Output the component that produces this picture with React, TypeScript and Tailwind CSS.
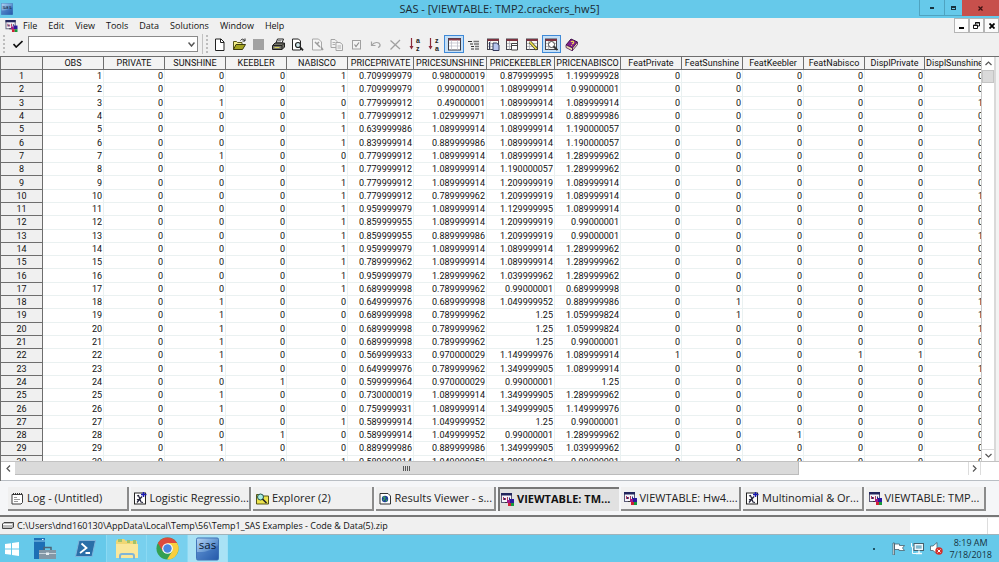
import React from "react";

type Column = { name: string; col: string };

const columns: Column[] = [
  { name: "OBS", col: "w-[61px]" },
  { name: "PRIVATE", col: "w-[61px]" },
  { name: "SUNSHINE", col: "w-[61px]" },
  { name: "KEEBLER", col: "w-[61px]" },
  { name: "NABISCO", col: "w-[61px]" },
  { name: "PRICEPRIVATE", col: "w-[66px]" },
  { name: "PRICESUNSHINE", col: "w-[73px]" },
  { name: "PRICEKEEBLER", col: "w-[68px]" },
  { name: "PRICENABISCO", col: "w-[66px]" },
  { name: "FeatPrivate", col: "w-[61px]" },
  { name: "FeatSunshine", col: "w-[61px]" },
  { name: "FeatKeebler", col: "w-[61px]" },
  { name: "FeatNabisco", col: "w-[61px]" },
  { name: "DisplPrivate", col: "w-[60px]" },
  { name: "DisplSunshine", col: "w-[60px]" },
];

// choice flags | four prices | feature and display flags
const records = `
0 0 0 1 0.709999979 0.980000019 0.879999995 1.199999928 0 0 0 0 0 0
0 0 0 1 0.709999979 0.99000001 1.089999914 0.99000001 0 0 0 0 0 0
0 1 0 0 0.779999912 0.49000001 1.089999914 1.089999914 0 0 0 0 0 1
0 0 0 1 0.779999912 1.029999971 1.089999914 0.889999986 0 0 0 0 0 0
0 0 0 1 0.639999986 1.089999914 1.089999914 1.190000057 0 0 0 0 0 0
0 0 0 1 0.839999914 0.889999986 1.089999914 1.190000057 0 0 0 0 0 0
0 1 0 0 0.779999912 1.089999914 1.089999914 1.289999962 0 0 0 0 0 0
0 0 0 1 0.779999912 1.089999914 1.190000057 1.289999962 0 0 0 0 0 0
0 0 0 1 0.779999912 1.089999914 1.209999919 1.089999914 0 0 0 0 0 0
0 0 0 1 0.779999912 0.789999962 1.209999919 1.089999914 0 0 0 0 0 1
0 0 0 1 0.959999979 1.089999914 1.129999995 1.089999914 0 0 0 0 0 0
0 0 0 1 0.859999955 1.089999914 1.209999919 0.99000001 0 0 0 0 0 0
0 0 0 1 0.859999955 0.889999986 1.209999919 0.99000001 0 0 0 0 0 1
0 0 0 1 0.959999979 1.089999914 1.089999914 1.289999962 0 0 0 0 0 0
0 0 0 1 0.789999962 1.089999914 1.089999914 1.289999962 0 0 0 0 0 0
0 0 0 1 0.959999979 1.289999962 1.039999962 1.289999962 0 0 0 0 0 0
0 0 0 1 0.689999998 0.789999962 0.99000001 0.689999998 0 0 0 0 0 0
0 1 0 0 0.649999976 0.689999998 1.049999952 0.889999986 0 1 0 0 0 1
0 1 0 0 0.689999998 0.789999962 1.25 1.059999824 0 1 0 0 0 1
0 1 0 0 0.689999998 0.789999962 1.25 1.059999824 0 0 0 0 0 1
0 1 0 0 0.689999998 0.789999962 1.25 0.99000001 0 0 0 0 0 0
0 1 0 0 0.569999933 0.970000029 1.149999976 1.089999914 1 0 0 1 1 0
0 1 0 0 0.649999976 0.789999962 1.349999905 1.089999914 0 0 0 0 0 1
0 0 1 0 0.599999964 0.970000029 0.99000001 1.25 0 0 0 0 0 0
0 1 0 0 0.730000019 1.089999914 1.349999905 1.289999962 0 0 0 0 0 0
0 1 0 0 0.759999931 1.089999914 1.349999905 1.149999976 0 0 0 0 0 0
0 0 0 1 0.589999914 1.049999952 1.25 0.99000001 0 0 0 0 0 0
0 0 1 0 0.589999914 1.049999952 0.99000001 1.289999962 0 0 1 0 0 0
0 1 0 0 0.889999986 0.889999986 1.349999905 1.039999962 0 0 0 0 0 0
0 0 0 1 0.589999914 1.049999952 1.289999962 0.99000001 0 0 0 0 0 0
`
  .trim()
  .split("\n")
  .map((line) => line.split(" "));

/* ---------- icons ---------- */

function ViewtableIcon({ className = "h-[13px] w-[13px]" }: { className?: string }) {
  return (
    <svg viewBox="0 0 13 13" className={className} aria-hidden="true">
      <rect x="0.5" y="0.5" width="10" height="9" fill="#f4f4fa" stroke="#5b5b78" />
      <path d="M0 0h11v2.5H0z" fill="#22255c" />
      <path d="M2.5 7V4M4.5 7V5M6.5 7V4" stroke="#b03a5a" strokeWidth="1" />
      <path d="M3.5 7V5M8.5 7V4.5" stroke="#28287a" strokeWidth="1" />
      <path d="M4 9.5h3" stroke="#333" strokeWidth="1" />
      <rect x="6" y="7" width="3" height="3" fill="#a01888" />
      <rect x="9" y="6" width="4" height="4" fill="#2a1a9c" />
      <rect x="7" y="10" width="3" height="3" fill="#d01f35" />
      <rect x="10" y="10" width="3" height="3" fill="#149a3c" />
    </svg>
  );
}

function SasBadge({ className }: { className: string }) {
  return (
    <svg viewBox="0 0 24 24" className={className} aria-hidden="true">
      <defs>
        <linearGradient id="sasBlue" x1="0" y1="0" x2="1" y2="1">
          <stop offset="0" stopColor="#b9d6f3" />
          <stop offset="0.45" stopColor="#6fa0d8" />
          <stop offset="1" stopColor="#1d4f9e" />
        </linearGradient>
      </defs>
      <rect x="0.5" y="0.5" width="23" height="23" rx="1.5" fill="url(#sasBlue)" stroke="#3b6fb5" />
      <path d="M1 15C9 16 17 13 23 8v15H1z" fill="#2b62b4" opacity="0.55" />
      <text x="12" y="12" textAnchor="middle" fontSize="12" fontWeight="500" fontFamily="Open Sans, sans-serif" fill="#0a1830">
        sas
      </text>
    </svg>
  );
}

function Glyph({ children, size = "h-[13px] w-[13px]" }: { children: React.ReactNode; size?: string }) {
  return (
    <svg viewBox="0 0 13 13" className={size} fill="none" aria-hidden="true">
      {children}
    </svg>
  );
}

const NewIcon = () => (
  <Glyph>
    <path d="M2.5 1h5.5l3 3v8.5h-8.5z" fill="#fff" stroke="#222" />
    <path d="M7.5 1v3.5h3.5" stroke="#222" />
  </Glyph>
);
const OpenIcon = () => (
  <Glyph>
    <path d="M0.5 11.5v-8h3l1 1h4.5v2" fill="#f3ee8a" stroke="#55551c" />
    <path d="M0.5 11.5l2.5-5h9.5l-3 5z" fill="#a5a421" stroke="#3c3c10" />
    <path d="M7.5 2.5c1.5-2 3-1.5 4 0M12 0.5v2.5H9.5" stroke="#222" />
  </Glyph>
);
const SaveIcon = () => (
  <Glyph>
    <rect x="1" y="1" width="11" height="11" fill="#a2a2a2" />
  </Glyph>
);
const PrintIcon = () => (
  <Glyph>
    <path d="M4 5l1.5-4h6L10 5z" fill="#fff" stroke="#222" />
    <path d="M5.5 2.5h4M5 4h4" stroke="#555" strokeWidth="0.7" />
    <path d="M0.5 7.5L3 5h9.5v4L10 11.5H0.5z" fill="#74746a" stroke="#1e1e1e" />
    <path d="M1 7.5h9v4M10 7.5L12.5 5" stroke="#222" />
    <path d="M2.5 9.5h5" stroke="#d9d35a" />
  </Glyph>
);
const PreviewIcon = () => (
  <Glyph>
    <path d="M1.5 1h6l2 2v9h-8z" fill="#fff" stroke="#222" />
    <circle cx="7" cy="7" r="2.5" fill="#cfe6ea" stroke="#222" strokeWidth="1.2" />
    <path d="M9 9l3 3.3" stroke="#222" strokeWidth="1.8" />
  </Glyph>
);
const CutIcon = () => (
  <Glyph>
    <path d="M1.5 1h6l3 3v8h-9z" fill="#f5f5f5" stroke="#a8a8a8" />
    <path d="M4 4l5 5M8 4L6 6M10 9l2 3" stroke="#9c9c9c" strokeWidth="1.5" />
  </Glyph>
);
const CopyIcon = () => (
  <Glyph>
    <path d="M1 1.5h4l2 2v6H1z" fill="#f2f2f2" stroke="#a5a5a5" />
    <path d="M6 4.5h4l2.5 2v6H6z" fill="#f2f2f2" stroke="#a5a5a5" />
    <path d="M2.5 4.5h3M2.5 6.5h3M7.5 8h3.5M7.5 10h3.5" stroke="#b0b0b0" />
  </Glyph>
);
const SubmitIcon = () => (
  <Glyph>
    <rect x="2.5" y="2.5" width="8" height="8.5" fill="#f4f4f4" stroke="#a0a0a0" />
    <path d="M4.5 6.5l1.5 2 3-4" stroke="#8e8e8e" strokeWidth="1.2" />
  </Glyph>
);
const UndoIcon = () => (
  <Glyph>
    <path d="M2.5 3.5v4h4M3 7c2-3 7-3.5 8-.5 .3 1.5-.5 2.5-2 3" stroke="#a3a3a3" strokeWidth="1.2" />
  </Glyph>
);
const DeleteIcon = () => (
  <Glyph>
    <path d="M1.5 2.5l9.5 8.5M11 2L1.5 11.5" stroke="#a0a0a0" strokeWidth="1.3" />
  </Glyph>
);
function SortIcon({ top, bottom }: { top: string; bottom: string }) {
  return (
    <svg viewBox="0 0 13 18" className="h-[18px] w-[13px]" fill="none" aria-hidden="true">
      <path d="M2.5 3v9" stroke="#8c2a3a" strokeWidth="1.2" />
      <path d="M0.5 11h4L2.5 14.5z" fill="#8c2a3a" />
      <text x="7" y="8" fontSize="7" fontWeight="700" fontFamily="Liberation Sans, sans-serif" fill="#222">
        {top}
      </text>
      <text x="7" y="16" fontSize="7" fontWeight="700" fontFamily="Liberation Sans, sans-serif" fill="#222">
        {bottom}
      </text>
    </svg>
  );
}
const TableViewIcon = () => (
  <Glyph>
    <rect x="0.5" y="0.5" width="12" height="11.5" fill="#fff" stroke="#3b3b44" />
    <path d="M0.5 1.5h12" stroke="#8b3e4a" strokeWidth="2" />
    <path d="M3.5 2v10M9.5 2v10M1 5h11M1 8h11" stroke="#b9b9c4" strokeWidth="0.7" />
  </Glyph>
);
const FormViewIcon = () => (
  <Glyph>
    <path d="M1 3.5h4M3 6h3M4 8.5h3M4 11h3" stroke="#333" strokeWidth="1.2" />
    <path d="M6.5 3.5h5.5M7 6h5M8 8.5h4M8 11h4" stroke="#777" strokeWidth="1.5" />
  </Glyph>
);
function SheetIcon({ kind }: { kind: "paste" | "columns" | "edit" | "find" }) {
  return (
    <Glyph>
      <rect x="0.5" y="1" width="11" height="10.5" fill="#f7f7f2" stroke="#45454c" />
      <path d="M0.5 2h11.5" stroke="#7d3340" strokeWidth="2" />
      <path d="M3.5 3v8.5M1 5.5h10M1 8.5h10" stroke="#a5a5b0" strokeWidth="0.7" />
      {kind === "paste" && <path d="M2.5 4v7M6 5h3.5l2.5 2v5.5H6z" fill="#b9c6ee" stroke="#333a5c" />}
      {kind === "columns" && <path d="M5.5 5.5h6v6.5h-6zM5.5 7.5h6" fill="#fff" stroke="#444" />}
      {kind === "edit" && (
        <>
          <path d="M4 4l7 7.5" stroke="#3c3c22" strokeWidth="3" />
          <path d="M4 4l6.5 7" stroke="#ece04a" strokeWidth="1.8" />
        </>
      )}
      {kind === "find" && (
        <>
          <circle cx="6.5" cy="6.5" r="3" fill="#fff" stroke="#444" />
          <path d="M8.5 8.5l4 3.5" stroke="#333" strokeWidth="1.8" />
        </>
      )}
    </Glyph>
  );
}
const HelpBookIcon = () => (
  <Glyph>
    <path d="M1 7l5-6 6.5 3-5 6z" fill="#84208c" stroke="#3c0e46" />
    <path d="M1 7v2.5l6.5 3.5v-3zM7.5 10l5-6v2.5l-5 6z" fill="#f0dfb0" stroke="#4c1656" strokeWidth="0.8" />
    <path d="M6 4c1-1.5 3.5-.5 2.5 1L7 6M6.2 7.5h.8" stroke="#f4e34f" strokeWidth="1.1" />
  </Glyph>
);

const LogIcon = () => (
  <Glyph>
    <path d="M1 2.5h10.5v8L10 12H1z" fill="#fff" stroke="#3d3d3d" />
    <path d="M2.5 1v2M4.5 1v2M6.5 1v2M8.5 1v2M10.5 1v2" stroke="#333" />
    <path d="M3 5.5h3M3 7.5h6M3 9.5h4" stroke="#999" />
  </Glyph>
);
const ProgramIcon = () => (
  <Glyph>
    <rect x="0.5" y="1" width="11" height="11" fill="#fff" stroke="#222" />
    <path d="M3 4l1.5-.5L7 10l2 .5M8 4.5L3 10.5M3 8l5-3" stroke="#23233a" strokeWidth="1.2" />
    <path d="M9.5 0v5M7 2.5h5.5" stroke="#1a1ab4" strokeWidth="1.5" />
  </Glyph>
);
const ExplorerIcon = () => (
  <Glyph>
    <path d="M0.5 2.5h4l1 1.5h7v8h-12z" fill="#eee44c" stroke="#56561a" />
    <circle cx="4.5" cy="5" r="3" fill="#a9ece2" stroke="#22524c" />
    <path d="M6.5 7l4 4" stroke="#222" strokeWidth="1.6" />
  </Glyph>
);
const ResultsIcon = () => (
  <Glyph>
    <path d="M1 1.5h8l2.5 2.5v8H1z" fill="#fff" stroke="#333" />
    <circle cx="6" cy="7" r="3.2" fill="#1f3d9c" />
    <path d="M4 5.5c1-1 2-.5 2 .5S4.5 7.5 4 8.5M8 7.5l-1 2" stroke="#3aa553" strokeWidth="1.3" />
  </Glyph>
);

/* ---------- sections ---------- */

function TitleBar() {
  return (
    <header className="grid h-[18px] shrink-0 grid-cols-[1fr_auto_1fr] items-start bg-[#66c9ea]">
      <div className="px-px pt-[3px]">
        <SasBadge className="h-3 w-3" />
      </div>
      <h1 className="text-[11px] leading-[18px] text-[#1b2a33]">SAS - [VIEWTABLE: TMP2.crackers_hw5]</h1>
      <div className="flex h-4 justify-end">
        <button aria-label="Minimize" className="flex w-[25px] items-center justify-center border-b border-l border-[#4fa3c0]">
          <span className="h-[2px] w-1 bg-[#17333f]" />
        </button>
        <button aria-label="Restore" className="flex w-[18px] items-center justify-center border-b border-l border-[#4fa3c0]">
          <span className="h-1 w-[5px] border border-t-2 border-[#17333f]" />
        </button>
        <button aria-label="Close" className="flex w-[37px] items-center justify-center bg-[#c7504c]">
          <svg viewBox="0 0 5 5" className="h-[5px] w-[5px]" aria-hidden="true">
            <path d="M0.5 0.5l4 4M4.5 0.5l-4 4" stroke="#3a1010" strokeWidth="1.2" />
          </svg>
        </button>
      </div>
    </header>
  );
}

const menus = ["File", "Edit", "View", "Tools", "Data", "Solutions", "Window", "Help"];

function MenuBar() {
  return (
    <nav className="flex h-4 shrink-0 items-center pl-[5px]">
      <ViewtableIcon className="mr-[5px] h-3 w-[13px]" />
      <div className="flex flex-1 gap-[11px] text-[9px] leading-4 text-[#111]">
        {menus.map((menu) => (
          <button key={menu}>{menu}</button>
        ))}
      </div>
      <div className="flex h-[15px] self-start">
        <button aria-label="Minimize table" className="flex w-[15px] items-end justify-center border border-[#b5b5b5] bg-[#fbfbfb] pb-[3px]">
          <span className="h-[2px] w-[5px] bg-black" />
        </button>
        <button aria-label="Restore table" className="flex w-[15px] items-center justify-center border border-[#b5b5b5] bg-[#fbfbfb]">
          <svg viewBox="0 0 7 7" className="h-[7px] w-[7px]" fill="none" stroke="#111" aria-hidden="true">
            <path d="M2.5 2.5v-2h4v3.5h-1.5M2 1h5" />
            <path d="M0.5 3h4v3.5h-4zM0 3.5h5" />
          </svg>
        </button>
        <button aria-label="Close table" className="flex w-[15px] items-center justify-center border border-[#b5b5b5] bg-[#fbfbfb]">
          <svg viewBox="0 0 6 6" className="h-[6px] w-[6px]" stroke="#000" strokeWidth="1.8" aria-hidden="true">
            <path d="M0.5 0.5l5 5M5.5 0.5l-5 5" />
          </svg>
        </button>
      </div>
    </nav>
  );
}

const tools: { label: string; icon: React.ReactNode; pressed?: boolean }[] = [
  { label: "New", icon: <NewIcon /> },
  { label: "Open", icon: <OpenIcon /> },
  { label: "Save", icon: <SaveIcon /> },
  { label: "Print", icon: <PrintIcon /> },
  { label: "Print preview", icon: <PreviewIcon /> },
  { label: "Cut", icon: <CutIcon /> },
  { label: "Copy", icon: <CopyIcon /> },
  { label: "Paste", icon: <SubmitIcon /> },
  { label: "Undo", icon: <UndoIcon /> },
  { label: "Delete", icon: <DeleteIcon /> },
  { label: "Sort ascending", icon: <SortIcon top="a" bottom="z" /> },
  { label: "Sort descending", icon: <SortIcon top="z" bottom="a" /> },
  { label: "Table view", icon: <TableViewIcon />, pressed: true },
  { label: "Form view", icon: <FormViewIcon /> },
  { label: "Add row", icon: <SheetIcon kind="paste" /> },
  { label: "Columns", icon: <SheetIcon kind="columns" /> },
  { label: "Edit mode", icon: <SheetIcon kind="edit" /> },
  { label: "Browse mode", icon: <SheetIcon kind="find" />, pressed: true },
  { label: "Help", icon: <HelpBookIcon /> },
];

function Grip() {
  return <span className="h-[18px] w-px border-l-2 border-dotted border-[#bdbdbd]" />;
}

function Toolbar() {
  return (
    <div className="flex h-[22px] shrink-0 items-center pb-[2px] pl-[3px]">
      <Grip />
      <button aria-label="Submit command" className="ml-2 mr-[5px] flex w-[10px] items-center">
        <svg viewBox="0 0 10 8" className="h-2 w-[10px]" fill="none" stroke="#111" strokeWidth="1.7" aria-hidden="true">
          <path d="M0.5 4l2.7 3L9.5 1" />
        </svg>
      </button>
      <div className="grid w-[170px] items-center">
        <select aria-label="Command" className="col-start-1 row-start-1 h-4 w-full appearance-none border border-[#8a8a8a] bg-white">
          <option value=""></option>
        </select>
        <svg viewBox="0 0 7 5" className="pointer-events-none col-start-1 row-start-1 mr-[3px] h-[5px] w-[7px] justify-self-end" fill="none" stroke="#555" strokeWidth="1.5" aria-hidden="true">
          <path d="M0.5 0.5l3 3.5 3-3.5" />
        </svg>
      </div>
      <span className="ml-1 mr-[3px] h-[20px] w-px bg-[#c2c2c2]" />
      <Grip />
      <div className="ml-[2px] grid w-[371px] grid-cols-[repeat(19,minmax(0,1fr))]">
        {tools.map((tool) => (
          <button
            key={tool.label}
            aria-label={tool.label}
            className={
              tool.pressed
                ? "flex h-[18px] items-center justify-center border border-[#3f8ad8] bg-[#c5dff6]"
                : "flex h-[18px] items-center justify-center"
            }
          >
            {tool.icon}
          </button>
        ))}
      </div>
    </div>
  );
}

function Chevron({ turn }: { turn: string }) {
  return (
    <svg viewBox="0 0 7 5" className={`h-[5px] w-[7px] ${turn}`} fill="none" stroke="#555" strokeWidth="1.2" aria-hidden="true">
      <path d="M0.5 4l3-3 3 3" />
    </svg>
  );
}

function DataTable() {
  return (
    <table className="h-[412px] w-[984px] table-fixed border-separate border-spacing-0 font-['Roboto','Liberation_Sans',sans-serif] text-[9px] leading-[12px] text-[#111]">
      <colgroup>
        <col className="w-[42px]" />
        {columns.map((column) => (
          <col key={column.name} className={column.col} />
        ))}
      </colgroup>
      <thead>
        <tr>
          <th aria-label="Row" className="border-b border-r border-[#6e6e6e] bg-[#f0f0f0] p-0" />
          {columns.map((column) => (
            <th key={column.name} scope="col" className="whitespace-nowrap border-b border-r border-[#6e6e6e] bg-[#f3f3f3] p-0 text-center font-normal">
              {column.name}
            </th>
          ))}
        </tr>
      </thead>
      <tbody>
        {records.map((record, index) => (
          <tr key={index}>
            <th scope="row" className="border-b border-r border-[#6e6e6e] bg-[#f0f0f0] p-0 text-center font-normal">
              {index + 1}
            </th>
            {[String(index + 1), ...record].map((value, cell) => (
              <td key={cell} className="border-b border-r border-[#eaf1f1] p-0 pr-px text-right">
                {value}
              </td>
            ))}
          </tr>
        ))}
      </tbody>
    </table>
  );
}

function TableWindow() {
  return (
    <main className="flex min-h-0 flex-1 flex-col border-l border-t border-[#6e6e6e] bg-white">
      <div className="flex min-h-0 flex-1">
        <div className="min-w-0 flex-1 overflow-hidden">
          <DataTable />
        </div>
        <div className="flex w-[13px] flex-col border-l border-[#c9c9c9] bg-white">
          <button aria-label="Scroll up" className="flex h-[13px] items-center justify-center">
            <Chevron turn="rotate-0" />
          </button>
          <div className="h-[13px] border border-[#c4c4c4] bg-[#dadada]" />
          <div className="flex-1" />
          <button aria-label="Scroll down" className="flex h-3 items-center justify-center border-t border-[#dcdcdc]">
            <Chevron turn="rotate-180" />
          </button>
        </div>
        <div className="w-[5px] border-l-2 border-[#d9d9d9] bg-[#f3f3f3]" />
      </div>
      <div className="flex h-[14px] shrink-0 border-t border-[#c2c2c2] pr-[18px]">
        <button aria-label="Scroll left" className="flex w-[14px] items-center justify-center">
          <Chevron turn="-rotate-90" />
        </button>
        <div className="flex w-4/5 items-center justify-center gap-px border-b border-r border-[#bcbcbc] bg-[#dadada]">
          <span className="h-[5px] w-px bg-[#555]" />
          <span className="h-[5px] w-px bg-[#555]" />
          <span className="h-[5px] w-px bg-[#555]" />
          <span className="h-[5px] w-px bg-[#555]" />
        </div>
        <div className="flex-1" />
        <button aria-label="Scroll right" className="flex w-[13px] items-center justify-center border-x border-[#dcdcdc]">
          <Chevron turn="rotate-90" />
        </button>
      </div>
      <div className="h-[6px] shrink-0 border-b border-[#b9bec4]" />
    </main>
  );
}

const windows: { title: string; icon: React.ReactNode; active?: boolean }[] = [
  { title: "Log - (Untitled)", icon: <LogIcon /> },
  { title: "Logistic Regressio...", icon: <ProgramIcon /> },
  { title: "Explorer (2)", icon: <ExplorerIcon /> },
  { title: "Results Viewer - s...", icon: <ResultsIcon /> },
  { title: "VIEWTABLE: TM...", icon: <ViewtableIcon />, active: true },
  { title: "VIEWTABLE: Hw4....", icon: <ViewtableIcon /> },
  { title: "Multinomial & Or...", icon: <ProgramIcon /> },
  { title: "VIEWTABLE: TMP...", icon: <ViewtableIcon /> },
];

function WindowTabs() {
  return (
    <div className="grid h-9 shrink-0 grid-cols-8 gap-[2px] border-b-2 border-[#777] bg-[#f5f6f8] pb-[4px] pl-2 pr-[13px] pt-[6px]">
      {windows.map((item, index) => (
        <button
          key={index}
          className={
            item.active
              ? "flex min-w-0 items-center gap-[3px] whitespace-nowrap border-l-2 border-t-2 border-[#777] bg-[#e1e1e1] pb-[2px] pl-px text-[11px] font-bold text-[#111]"
              : "flex min-w-0 items-center gap-[3px] whitespace-nowrap border-b-2 border-r-2 border-[#8b8b8b] bg-[#f0f0f0] pl-[3px] pt-px text-[11px] text-[#222]"
          }
        >
          <span className="shrink-0">{item.icon}</span>
          {item.title}
        </button>
      ))}
    </div>
  );
}

function StatusBar() {
  return (
    <div className="flex h-[18px] shrink-0 items-center border-b border-[#9fb3bb] bg-[#f0f0f0] pl-[2px] text-[9px] text-[#111]">
      <svg viewBox="0 0 12 7" className="mr-[3px] h-[7px] w-3" aria-hidden="true">
        <path d="M2 0.5h9.5v4.5L10 6.5H0.5V2z" fill="#bdbdbd" stroke="#444" />
        <path d="M1 2.5h9" stroke="#fff" />
      </svg>
      <p className="flex-1">C:\Users\dnd160130\AppData\Local\Temp\56\Temp1_SAS Examples - Code &amp; Data(5).zip</p>
      <span className="h-4 w-[78px] border-r border-[#ddd] bg-white" />
      <span className="h-4 w-[11px] bg-white" />
    </div>
  );
}

function Taskbar() {
  return (
    <footer className="flex h-[27px] shrink-0 items-stretch bg-[#66c9ea]">
      <button aria-label="Start" className="flex w-[24px] items-center justify-center">
        <svg viewBox="0 0 14 14" className="h-[14px] w-[14px]" fill="#fff" aria-hidden="true">
          <path d="M0 2l6-.8v5.3H0zM7 1l7-1v6.5H7zM0 7.5h6v5.3L0 12zM7 7.5h7V14l-7-1z" />
        </svg>
      </button>
      <button aria-label="Server Manager" className="flex w-[41px] items-center justify-center">
        <svg viewBox="0 0 24 22" className="h-[22px] w-6" aria-hidden="true">
          <path d="M1 0h11v21H1z" fill="#1d6fb5" />
          <path d="M1 3h11" stroke="#8fd0f0" />
          <path d="M9 1.5h1.5" stroke="#fff" />
          <path d="M11 12V9.5h7V12" fill="none" stroke="#4e6476" strokeWidth="1.5" />
          <path d="M6 12h17v9H6z" fill="#8397a6" />
          <path d="M6 15.5h17" stroke="#c6d3dc" />
          <path d="M13 14.5h3v2.5h-3z" fill="#e9eff3" />
        </svg>
      </button>
      <button aria-label="PowerShell" className="flex w-[41px] items-center justify-center">
        <svg viewBox="0 0 21 17" className="h-[17px] w-[21px]" aria-hidden="true">
          <path d="M4 0.5h16.5L17 16.5H0.5z" fill="#2a6ea8" stroke="#7fb3da" />
          <path d="M6.5 3.5l5 4.5-6.5 5M10.5 13h4.5" fill="none" stroke="#fff" strokeWidth="1.8" />
        </svg>
      </button>
      <button aria-label="File Explorer" className="flex w-[41px] items-center justify-center border-x border-[#8bd9f3] bg-[#78d0ee]">
        <svg viewBox="0 0 24 22" className="h-[22px] w-6" aria-hidden="true">
          <path d="M1 3l2-2h6l2 2h11v17H1z" fill="#f0d774" />
          <path d="M3 1h4v3H3zM12 2h3v3h-3zM18 2h3v4h-3z" fill="#a3c36a" />
          <path d="M1 6h22v14H1z" fill="#fae79b" />
          <path d="M5 21v-3c0-1 1-2 2-2h10c1 0 2 1 2 2v3" fill="none" stroke="#7fb5d8" strokeWidth="2" />
        </svg>
      </button>
      <button aria-label="Chrome" className="flex w-[41px] items-center justify-center border-r border-[#8bd9f3] bg-[#78d0ee]">
        <svg viewBox="0 0 24 24" className="h-[23px] w-[23px]" aria-hidden="true">
          <circle cx="12" cy="12" r="11.5" fill="#34a052" />
          <path d="M12 12L2 6.3A11.5 11.5 0 0 1 22 6.3z" fill="#dd4a3c" />
          <path d="M12 6.3h10A11.5 11.5 0 0 1 11.5 23.5L17 14.5z" fill="#f8cf3d" />
          <path d="M2 6.3L7 14.8 12 6.3z" fill="#dd4a3c" />
          <circle cx="12" cy="12" r="5.6" fill="#fff" />
          <circle cx="12" cy="12" r="4.4" fill="#4a86e0" />
        </svg>
      </button>
      <button aria-label="SAS" className="flex w-[40px] items-center justify-center border-r border-[#9ee0f5] bg-[#a9e2f5]">
        <SasBadge className="h-6 w-[23px]" />
      </button>
      <div className="flex flex-1 items-center justify-end gap-[6px] pr-[7px]">
        <span className="mr-[11px] h-[2px] w-[2px] bg-[#1d5366]" />
        <svg viewBox="0 0 13 13" className="h-[13px] w-[13px]" fill="#fff" stroke="#47616d" strokeWidth="0.8" aria-hidden="true">
          <path d="M1 1h1.5v12H1zM2.5 2h5v1.5h5l-2 2.5 2 2.5H7V7.5H2.5z" />
        </svg>
        <svg viewBox="0 0 13 13" className="h-[13px] w-[13px]" fill="none" stroke="#47616d" aria-hidden="true">
          <rect x="3" y="1.5" width="9.5" height="7" fill="#e9f7fc" />
          <rect x="4.5" y="3" width="6.5" height="4" fill="#7fb8ce" stroke="#fff" strokeWidth="0.6" />
          <path d="M5 11.5h6M8 8.5v3" stroke="#f4fbfd" strokeWidth="1.5" />
          <path d="M0.5 1v4h2M1.5 5v6.5H5" stroke="#f4fbfd" />
        </svg>
        <svg viewBox="0 0 13 13" className="h-[13px] w-[13px]" aria-hidden="true">
          <path d="M0.5 4h2.5L7 0.5v11.5L3 8.5H0.5z" fill="#fff" stroke="#47616d" strokeWidth="0.8" />
          <circle cx="9" cy="9" r="3.7" fill="#d3302b" />
          <path d="M7.5 7.5l3 3M10.5 7.5l-3 3" stroke="#fff" />
        </svg>
        <div className="text-center text-[9px] leading-[12px] text-[#16333f]">
          <div>8:19 AM</div>
          <div>7/18/2018</div>
        </div>
      </div>
    </footer>
  );
}

export default function App() {
  return (
    <div className="flex h-screen flex-col overflow-hidden bg-[#f0f0f0] font-['Open_Sans','Noto_Sans',sans-serif]">
      <TitleBar />
      <MenuBar />
      <Toolbar />
      <TableWindow />
      <WindowTabs />
      <StatusBar />
      <Taskbar />
    </div>
  );
}
